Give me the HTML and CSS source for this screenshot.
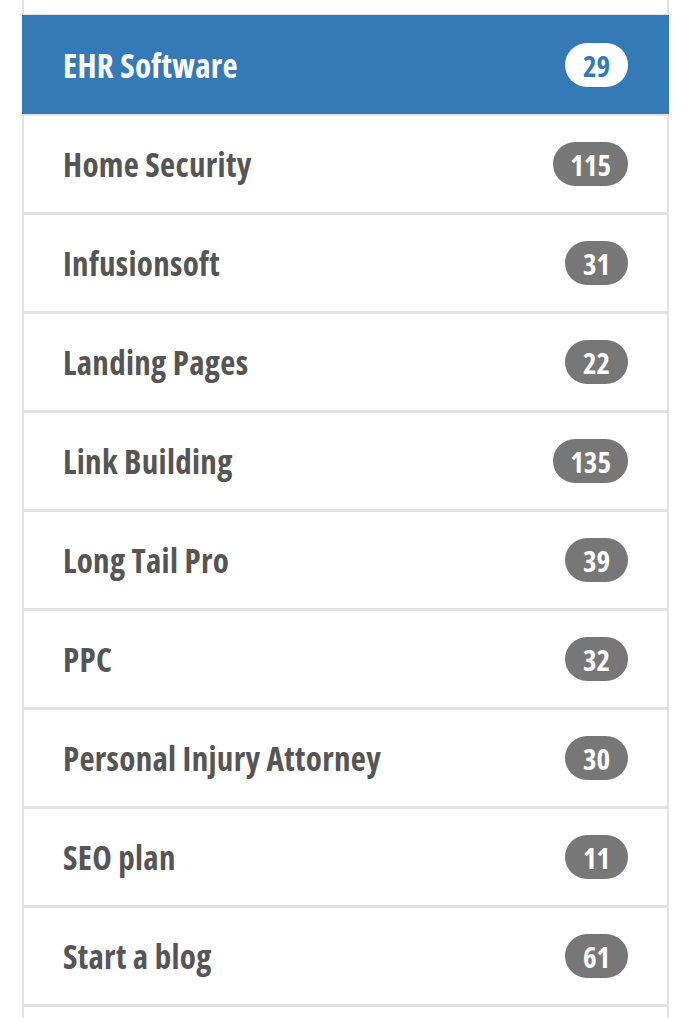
FILE: index.html
```html
<!DOCTYPE html>
<html>
<head>
<meta charset="utf-8">
<link rel="stylesheet" href="styles.css">
</head>
<body>
<div class="list">
  <div class="item item-top"></div>
  <a class="item active"><span class="label">EHR Software</span><span class="badge">29</span></a>
  <a class="item"><span class="label">Home Security</span><span class="badge">115</span></a>
  <a class="item"><span class="label">Infusionsoft</span><span class="badge">31</span></a>
  <a class="item"><span class="label">Landing Pages</span><span class="badge">22</span></a>
  <a class="item"><span class="label">Link Building</span><span class="badge">135</span></a>
  <a class="item"><span class="label">Long Tail Pro</span><span class="badge">39</span></a>
  <a class="item"><span class="label">PPC</span><span class="badge">32</span></a>
  <a class="item"><span class="label">Personal Injury Attorney</span><span class="badge">30</span></a>
  <a class="item"><span class="label">SEO plan</span><span class="badge">11</span></a>
  <a class="item"><span class="label">Start a blog</span><span class="badge">61</span></a>
  <div class="item item-bottom"></div>
</div>
</body>
</html>
```
FILE: styles.css
```css
html, body {
  margin: 0;
  padding: 0;
  background: #fff;
  overflow: hidden;
}
.list {
  margin: 0 31px 0 22px;
  display: flex;
  flex-direction: column;
  font-family: "Open Sans", "DejaVu Sans Condensed", sans-serif;
  font-stretch: 75%;
  font-weight: 700;
}
.item {
  box-sizing: border-box;
  height: 100px;
  margin-bottom: -1px;
  border: 2px solid #e2e2e2;
  display: flex;
  align-items: center;
  justify-content: space-between;
  padding: 0 39px 0 39px;
  color: #555;
  background: #fff;
  text-decoration: none;
}
.item-top {
  height: 17px;
  border-top: none;
  margin-top: -1px;
}
.item-bottom {
  height: 30px;
}
.label {
  font-size: 33px;
  letter-spacing: 0.3px;
}
.badge {
  min-width: 63px;
  height: 44px;
  box-sizing: border-box;
  padding: 0 17px;
  border-radius: 22px;
  background: #777;
  color: #fff;
  font-size: 29px;
  display: flex;
  align-items: center;
  justify-content: center;
}
.active {
  background: #337ab7;
  border-color: #337ab7;
  color: #fff;
}
.active .badge {
  background: #fff;
  color: #337ab7;
}
```
